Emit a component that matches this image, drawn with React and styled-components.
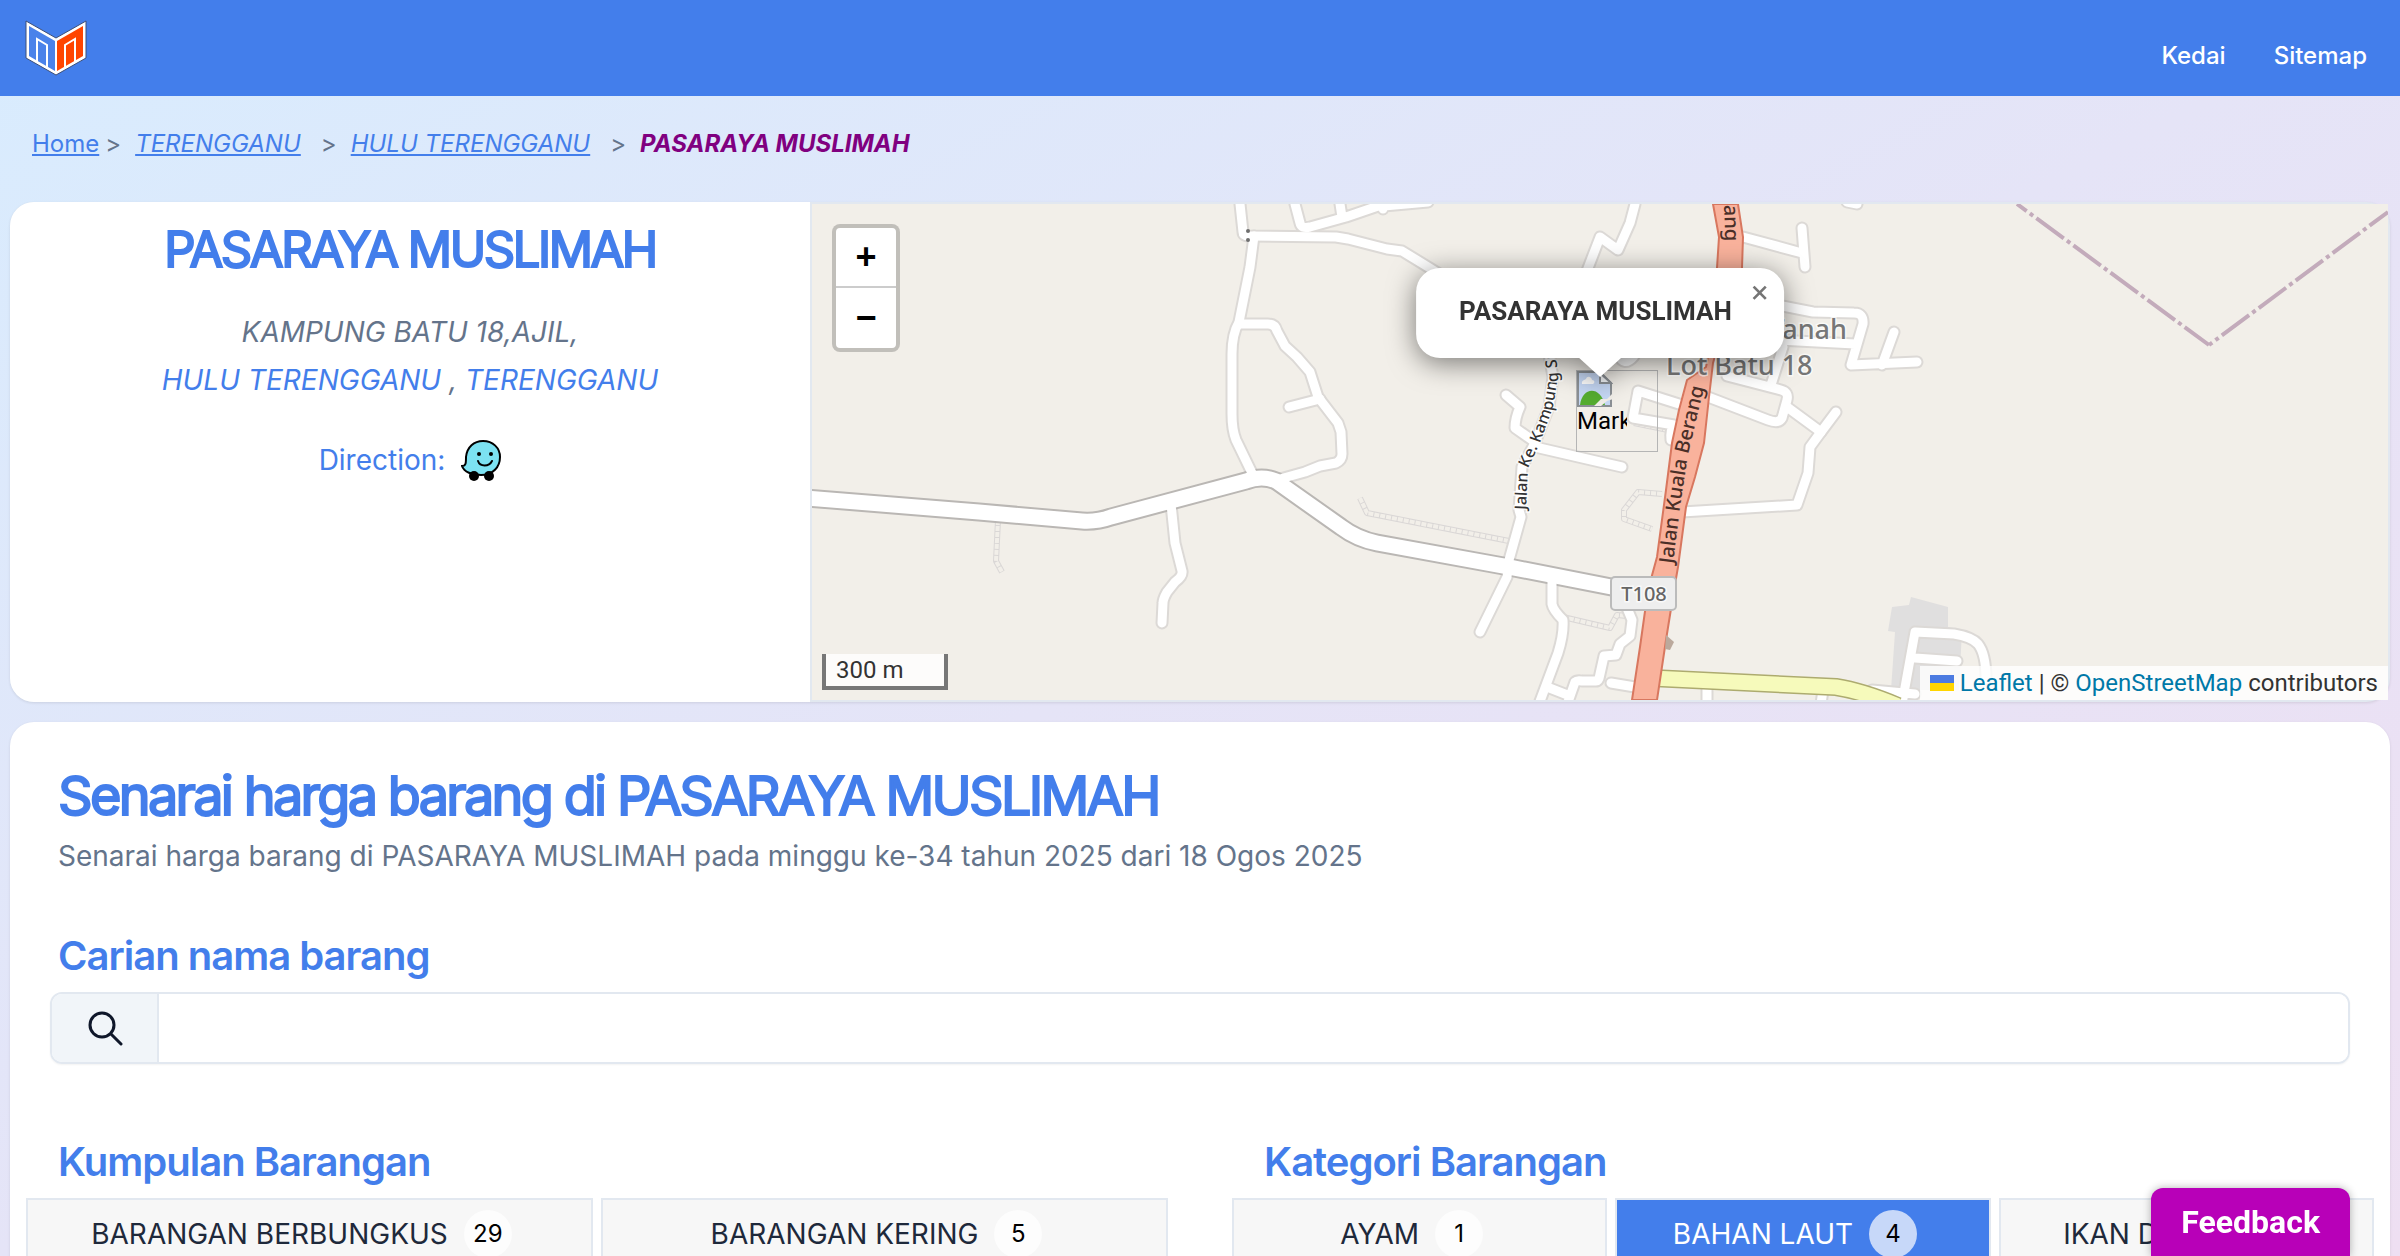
import React, { useState } from 'react'
import styled, { createGlobalStyle } from 'styled-components'

const KUMPULAN = [
    { name: 'BARANGAN BERBUNGKUS', total: 29 },
    { name: 'BARANGAN KERING', total: 5 },
]

const KATEGORI = [
    { name: 'AYAM', total: 1 },
    { name: 'BAHAN LAUT', total: 4 },
    { name: 'IKAN DARAT', total: 2 },
]

export default function App() {
    const [kumpulan, setKumpulan] = useState('')
    const [kategori, setKategori] = useState('BAHAN LAUT')

    return (
        <Page>
            <GlobalStyle />
            <Navbar>
                <LogoLink href="#" aria-label="Laman utama"><Logo /></LogoLink>
                <NavLinks>
                    <a href="#kedai">Kedai</a>
                    <a href="#sitemap">Sitemap</a>
                </NavLinks>
            </Navbar>

            <Breadcrumb aria-label="Breadcrumb">
                <Crumb><a href="#home">Home</a></Crumb>
                <Crumb $italic><Arrow>&gt;</Arrow><a href="#negeri">TERENGGANU</a></Crumb>
                <Crumb $italic $spaced><Arrow>&gt;</Arrow><a href="#daerah">HULU TERENGGANU</a></Crumb>
                <Crumb $italic $spaced><Arrow>&gt;</Arrow><Current>PASARAYA MUSLIMAH</Current></Crumb>
            </Breadcrumb>

            <StoreRow>
                <StoreInfo>
                    <StoreName>PASARAYA MUSLIMAH</StoreName>
                    <Address>
                        KAMPUNG BATU 18,AJIL,<br />
                        <a href="#daerah">HULU TERENGGANU</a> , <a href="#negeri">TERENGGANU</a>
                    </Address>
                    <Direction href="#waze">Direction: <Waze /></Direction>
                </StoreInfo>
                <MapPanel>
                    <MapTiles />
                    <BrokenMarker><BrokenImage /><span>Marker</span></BrokenMarker>
                    <Popup>
                        <strong>PASARAYA MUSLIMAH</strong>
                        <PopupClose type="button" aria-label="Close popup">×</PopupClose>
                    </Popup>
                    <ZoomControl>
                        <button type="button" aria-label="Zoom in">+</button>
                        <button type="button" aria-label="Zoom out">−</button>
                    </ZoomControl>
                    <Scale>300 m</Scale>
                    <Attribution>
                        <Flag viewBox="0 0 12 8" aria-hidden="true">
                            <path fill="#4C7BE1" d="M0 0h12v4H0z" />
                            <path fill="#FFD500" d="M0 4h12v4H0z" />
                        </Flag>
                        <a href="#leaflet">Leaflet</a> | © <a href="#osm">OpenStreetMap</a> contributors
                    </Attribution>
                </MapPanel>
            </StoreRow>

            <PriceCard>
                <PriceHeader>
                    <Title>Senarai harga barang di PASARAYA MUSLIMAH</Title>
                    <Subtitle>Senarai harga barang di PASARAYA MUSLIMAH pada minggu ke-34 tahun 2025 dari 18 Ogos 2025</Subtitle>
                </PriceHeader>
                <SectionLabel as="label" htmlFor="carian">Carian nama barang</SectionLabel>
                <SearchBox>
                    <SearchIcon><Magnifier /></SearchIcon>
                    <input id="carian" type="text" />
                </SearchBox>
                <Groups>
                    <FilterGroup title="Kumpulan Barangan" items={KUMPULAN} active={kumpulan} onPick={setKumpulan} />
                    <FilterGroup title="Kategori Barangan" items={KATEGORI} active={kategori} onPick={setKategori} />
                </Groups>
            </PriceCard>

            <Feedback type="button">Feedback</Feedback>
        </Page>
    )
}

function FilterGroup({ title, items, active, onPick }) {
    return (
        <section>
            <SectionLabel>{title}</SectionLabel>
            <FilterGrid $columns={items.length}>
                {items.map((item) => (
                    <FilterButton
                        key={item.name}
                        type="button"
                        $active={item.name === active}
                        onClick={() => onPick(item.name)}
                    >
                        {item.name}
                        <Badge>{item.total}</Badge>
                    </FilterButton>
                ))}
            </FilterGrid>
        </section>
    )
}

function Logo() {
    return (
        <svg width="62" height="56" viewBox="0 0 62 56" aria-hidden="true">
            <path d="M1 1 31 18 61 1V38L31 55 1 38Z" fill="#fff" stroke="#3d4f78" strokeWidth="1" />
            <path d="M4 6 30 21V51L4 36Z" fill="#4a82ea" />
            <path d="M32 21 58 6V36L32 51Z" fill="#ff4500" />
            <g fill="none" stroke="#fff" strokeWidth="2">
                <path d="M12 42V19L22 25V48" />
                <path d="M40 48V25L50 19V42" />
            </g>
        </svg>
    )
}

function Waze() {
    return (
        <svg width="40" height="42" viewBox="0 0 40 42" aria-hidden="true">
            <path
                d="M22 2C32 2 39 9 39 18C39 28 32 36 20 36C11 36 3 33 1 27C5 27 5 24 5 18C6 8 13 2 22 2Z"
                fill="#7ce2f2" stroke="#000" strokeWidth="2"
            />
            <circle cx="13" cy="37" r="5" />
            <circle cx="28" cy="37" r="5" />
            <circle cx="18" cy="15" r="2" />
            <circle cx="30" cy="15" r="2" />
            <path d="M17 22C19 28 28 28 31 22" fill="none" stroke="#000" strokeWidth="2" strokeLinecap="round" />
        </svg>
    )
}

function Magnifier() {
    return (
        <svg width="36" height="36" viewBox="0 0 36 36" fill="none" stroke="#0f172a" strokeWidth="3" strokeLinecap="round" aria-hidden="true">
            <circle cx="15" cy="15" r="12" />
            <path d="m24 24 10 10" />
        </svg>
    )
}

function BrokenImage() {
    return (
        <svg width="36" height="36" viewBox="0 0 36 36" aria-hidden="true">
            <path d="M1 1H23L34 12V35H1Z" fill="#c6d8f5" stroke="#8b9095" strokeWidth="2" />
            <path d="M5 13C4 9 8 9 9 8C10 4 15 6 15 9C18 9 18 12 16 13Z" fill="#fff" />
            <path d="M3 34C5 16 23 14 28 34Z" fill="#55ad30" />
            <path d="M23 2V12H34Z" fill="#f4f6f8" stroke="#8b9095" strokeWidth="2" />
            <path d="M36 22 30 28H24L17 35H24L30 30L36 28Z" fill="#f1eee8" />
        </svg>
    )
}

const LANES = [
    'M428 0 431 28Q431 32 437 32L524 33 536 35 575 45 590 47 634 74',
    'M442 32 438 63 427 118Q420 130 420 150V210Q420 226 424 236L440 269',
    'M427 120H456Q463 120 465 127L473 142 485 153 498 168 506 193 526 219 529 228 530 250Q530 256 524 259L508 262 493 268 468 275',
    'M508 195 477 203',
    'M483 0 488 19Q489 25 498 23L534 13 572 0M528 0 530 13M572 2 616 -2M571 0V5',
    'M359 300 363 339 370 367Q371 372 363 378L355 388Q351 395 351 399L350 419',
    'M737 150 741 173 737 203 723 239 710 263 707 306 709 313 697 356 695 373 668 428',
    'M694 191 708 203Q703 214 703 224L723 238',
    'M723 243 788 258 810 263',
    'M740 372V400Q741 406 751 416Q752 430 746 449L727 500',
    'M735 483 758 492M756 498 763 478Q765 476 770 477L784 477Q787 477 788 470L792 452 804 451 808 440 818 432 820 416 815 404',
    'M799 479 823 483',
    'M823 0 818 19 806 46 788 33 773 72',
    'M931 33 990 49M990 24 993 63',
    'M960 100 1001 108 1042 109Q1052 109 1051 120L1039 161 1105 158M1082 128 1070 161M965 136 1043 140',
    'M959 181 971 143M915 172 969 186Q977 188 975 196L970 214Q967 220 956 216L896 193M975 203 1009 228 1024 208',
    'M1009 228 998 243 996 269 985 301 870 308',
    'M867 200 826 187 821 214 862 221Q858 226 859 236',
    'M806 150Q812 164 822 152',
    'M1090 500 1103 428 1142 430Q1160 433 1166 440Q1174 450 1174 475M1103 454 1145 457M1060 486 1103 490',
    'M895 482V500M1011 486 1009 500M1035 -2 1045 0',
]

const TRACKS = [
    'M548 294 555 309 697 337',
    'M751 413 798 424 805 411 815 412',
    'M186 316 184 357 190 368',
    'M850 290 826 288 812 306V315L840 325',
    'M822 219 856 226',
]

function MapTiles() {
    const trunk = 'M901 0 907 33 905 64 896 153 894 163 875 176 867 206 860 239 854 286 845 353 836 386 828 443 820 496H845L854 436 862 386 866 363 874 303 883 273 892 239 897 193 901 159 930 64 931 33 926 0Z'
    const mainRoad = 'M-5 294 167 308 270 317Q285 318 299 313L434 277Q450 271 464 277L529 323Q545 335 565 339L697 363 835 390'
    return (
        <MapSvg viewBox="0 0 1576 496" preserveAspectRatio="xMidYMid slice" role="img" aria-label="Peta kedai">
            <defs>
                <path id="ke" d="M714 306 716 264 728 239 741 203 746 173 743 140" />
                <path id="kuala" d="M861 360 868 303 876 250 893 180" />
            </defs>
            <rect width="1576" height="496" fill="#f2efe9" />
            <path d="M1080 403 1097 401 1099 393 1136 403V423L1150 426 1147 486H1079L1083 428 1076 427Z" fill="#e0dfdf" />
            <g fill="none" stroke="#dad7d6" strokeWidth="6" strokeLinejoin="round">
                {TRACKS.map((d) => <path key={d} d={d} />)}
            </g>
            <g fill="none" stroke="#f2efe9" strokeWidth="4" strokeLinejoin="round" strokeDasharray="5 1">
                {TRACKS.map((d) => <path key={d} d={d} />)}
            </g>
            <g fill="none" stroke="#dcd9d6" strokeWidth="13" strokeLinecap="round" strokeLinejoin="round">
                {LANES.map((d) => <path key={d} d={d} />)}
            </g>
            <path d={mainRoad} fill="none" stroke="#bab7b4" strokeWidth="19" />
            <g fill="none" stroke="#fff" strokeWidth="9" strokeLinecap="round" strokeLinejoin="round">
                {LANES.map((d) => <path key={d} d={d} />)}
            </g>
            <path d={mainRoad} fill="none" stroke="#fff" strokeWidth="15" />
            <path d="M840 474 1024 483Q1050 487 1086 502" fill="none" stroke="#adab6f" strokeWidth="18" />
            <path d="M840 474 1024 483Q1050 487 1086 502" fill="none" stroke="#f6fabb" strokeWidth="15" />
            <path d={trunk} fill="#f9b29c" stroke="#d8775f" strokeWidth="2" />
            <path d="M854 431 862 438 858 446 853 445Z" fill="#bba99c" />
            <circle cx="436" cy="27" r="2" fill="#6f6f6f" />
            <circle cx="436" cy="36" r="2" fill="#6f6f6f" />
            <g fill="none" stroke="#c3abbb" strokeWidth="4">
                <path d="M1205 0 1397 141" strokeDasharray="34 4 4 4" strokeDashoffset="22" />
                <path d="M1397 141 1576 8" strokeDasharray="34 4 4 4" strokeDashoffset="30" />
            </g>
            <MapLabels>
                <text fontSize="27" fill="#777" x="1035" y="135" textAnchor="end">Tanah</text>
                <text fontSize="27" fill="#777" x="854" y="171">Lot Batu 18</text>
                <text fontSize="16" fill="#333"><textPath href="#ke">Jalan Ke. Kampung Su</textPath></text>
                <RoadName fontSize="20"><textPath href="#kuala">Jalan Kuala Berang</textPath></RoadName>
                <RoadName fontSize="20" transform="translate(912 1) rotate(88)">ang</RoadName>
                <RoadName fontSize="20" transform="translate(840 502) rotate(-84)">J</RoadName>
            </MapLabels>
            <rect x="799" y="373" width="65" height="33" rx="4" fill="#eee" stroke="#bbb" strokeWidth="2" />
            <MapLabels>
                <text fontSize="20" fill="#666" x="832" y="397" textAnchor="middle">T108</text>
            </MapLabels>
        </MapSvg>
    )
}

const GlobalStyle = createGlobalStyle`

    *{
        box-sizing: border-box;
    }

    body{
        margin: 0;
        font-family: Inter, 'Liberation Sans', sans-serif;
        color: #64748b;
    }

    a{
        color: #437eeb;
        text-decoration: none;
    }

    button, input{
        font-family: inherit;
    }

`;

const Page = styled.div`

    height: 100vh;
    overflow: hidden;
    background: linear-gradient(to bottom right, #d8ecfe, #e5e4f7 50%, #eedff2);

`;

const Navbar = styled.header`

    display: flex;
    justify-content: space-between;
    align-items: center;
    height: 96px;
    padding: 0 33px 0 25px;
    background: #437eeb;

`;

const LogoLink = styled.a`

    display: flex;

`;

const NavLinks = styled.nav`

    display: flex;
    gap: 48px;
    padding-top: 16px;
    font-size: 24px;
    line-height: 32px;
    font-weight: 500;

    a{
        color: #fff;
    }

`;

const Breadcrumb = styled.nav`

    display: flex;
    gap: 6px;
    padding: 32px 32px 42px;
    font-size: 24px;
    line-height: 32px;

    a{
        text-decoration: underline;
    }

`;

const Crumb = styled.span`

    display: flex;
    gap: 14px;
    font-style: ${(props) => (props.$italic ? 'italic' : 'normal')};
    margin-left: ${(props) => (props.$spaced ? '14px' : '0')};

`;

const Arrow = styled.span`

    font-style: normal;

`;

const Current = styled.strong`

    color: #800080;

`;

const StoreRow = styled.section`

    display: grid;
    grid-template-columns: 40fr 79fr;
    margin: 0 10px 20px;
    background: #e2e8f0;
    border-radius: 24px;
    box-shadow: 0 1px 3px rgba(0, 0, 0, 0.1);

`;

const StoreInfo = styled.div`

    display: flex;
    flex-direction: column;
    align-items: center;
    min-height: 500px;
    padding-top: 16px;
    background: #fff;
    border-radius: 24px 0 0 24px;
    font-size: 28px;
    line-height: 48px;
    text-align: center;

`;

/* big headings: regular cut thickened with a stroke, tight tracking */
const Heading = styled.h2`

    margin: 0;
    font-weight: 400;
    letter-spacing: -0.05em;
    color: #437eeb;
    -webkit-text-stroke: 2px #437eeb;

`;

const StoreName = styled(Heading).attrs({ as: 'h1' })`

    margin-bottom: 26px;
    font-size: 49px;
    line-height: 64px;

`;

const Address = styled.address`

    margin-bottom: 32px;

`;

const Direction = styled.a`

    display: flex;
    align-items: center;
    gap: 16px;

`;

const MapPanel = styled.div`

    position: relative;
    margin: 2px;
    overflow: hidden;
    font-family: Roboto, 'Liberation Sans', sans-serif;
    color: #333;

`;

const MapSvg = styled.svg`

    position: absolute;
    inset: 0;
    width: 100%;
    height: 100%;

`;

const MapLabels = styled.g`

    font-family: 'Noto Sans', sans-serif;
    font-weight: 500;
    paint-order: stroke;
    stroke: rgba(255, 255, 255, 0.7);
    stroke-width: 3px;

`;

const RoadName = styled.text`

    fill: #4a2f28;
    stroke: none;

`;

const Popup = styled.div`

    position: absolute;
    top: 64px;
    left: 50%;
    transform: translateX(-50%);
    padding: 27px 52px 31px 43px;
    background: #fff;
    border-radius: 24px;
    font-size: 26px;
    line-height: 32px;
    white-space: nowrap;
    filter: drop-shadow(0 5px 14px rgba(0, 0, 0, 0.5));

    &::after{
        content: '';
        position: absolute;
        left: 50%;
        bottom: -19px;
        margin-left: -22px;
        border: 22px solid transparent;
        border-top: 20px solid #fff;
        border-bottom: 0;
    }

`;

const PopupClose = styled.button`

    position: absolute;
    top: 8px;
    right: 8px;
    width: 32px;
    height: 32px;
    padding: 0;
    border: 0;
    background: none;
    color: #757575;
    font-size: 32px;
    line-height: 32px;

`;

const BrokenMarker = styled.div`

    position: absolute;
    top: 166px;
    left: 50%;
    width: 82px;
    height: 82px;
    margin-left: -24px;
    border: 1px solid #b5b5b5;
    color: #000;
    font-size: 24px;
    line-height: 28px;

    svg{
        display: block;
    }

    span{
        display: block;
        width: 50px;
        overflow: hidden;
    }

`;

const ZoomControl = styled.div`

    position: absolute;
    top: 20px;
    left: 20px;
    display: flex;
    flex-direction: column;
    background: #fff;
    background-clip: padding-box;
    border: 4px solid rgba(0, 0, 0, 0.2);
    border-radius: 8px;

    button{
        width: 60px;
        height: 60px;
        padding: 0;
        border: 0;
        background: none;
        font: bold 36px/56px 'Liberation Sans', Arial, sans-serif;
        color: #000;
    }

    button:first-child{
        border-bottom: 2px solid #ccc;
    }

`;

const Scale = styled.div`

    position: absolute;
    left: 10px;
    bottom: 10px;
    width: 126px;
    height: 36px;
    padding-left: 10px;
    background: rgba(255, 255, 255, 0.8);
    border: 4px solid #777;
    border-top: 0;
    font-size: 24px;
    line-height: 32px;

`;

const Attribution = styled.div`

    position: absolute;
    right: 0;
    bottom: 0;
    display: flex;
    align-items: center;
    gap: 6px;
    padding: 0 10px;
    background: rgba(255, 255, 255, 0.8);
    font-size: 24px;
    line-height: 34px;

    a{
        color: #0078a8;
    }

`;

const Flag = styled.svg`

    width: 24px;
    height: 16px;

`;

const PriceCard = styled.main`

    margin: 0 10px;
    padding: 38px 16px 32px;
    background: #fff;
    border-radius: 24px;
    box-shadow: 0 1px 3px rgba(0, 0, 0, 0.1);

`;

const PriceHeader = styled.header`

    padding: 0 32px;
    margin-bottom: 52px;

`;

const Title = styled(Heading)`

    margin-bottom: 8px;
    font-size: 54px;
    line-height: 72px;

`;

const Subtitle = styled.p`

    margin: 0;
    font-size: 28px;
    line-height: 32px;

`;

const SectionLabel = styled.h3`

    display: block;
    margin: 0;
    padding: 0 32px;
    font-size: 40px;
    line-height: 64px;
    font-weight: 600;
    letter-spacing: -0.025em;
    color: #437eeb;

`;

const SearchBox = styled.div`

    display: flex;
    height: 72px;
    margin: 4px 24px 66px;
    border: 2px solid #e2e8f0;
    border-radius: 12px;
    overflow: hidden;
    box-shadow: 0 1px 2px rgba(0, 0, 0, 0.05);

    input{
        flex: 1;
        padding: 0 24px;
        border: 0;
        outline: none;
        font-size: 28px;
    }

`;

const SearchIcon = styled.span`

    display: flex;
    align-items: center;
    justify-content: center;
    width: 107px;
    background: #f1f5f9;
    border-right: 2px solid #e2e8f0;

`;

const Groups = styled.div`

    display: grid;
    grid-template-columns: 1fr 1fr;
    gap: 64px;

`;

const FilterGrid = styled.div`

    display: grid;
    grid-template-columns: repeat(${(props) => props.$columns}, 1fr);
    gap: 8px;
    margin-top: 4px;

`;

const FilterButton = styled.button`

    display: flex;
    align-items: center;
    justify-content: center;
    gap: 16px;
    height: 72px;
    padding: 0 16px 0 0;
    border: 2px solid #e2e8f0;
    background: ${(props) => (props.$active ? '#437eeb' : '#f7f7f7')};
    color: ${(props) => (props.$active ? '#fff' : '#1e293b')};
    font-size: 28px;
    white-space: nowrap;

`;

const Badge = styled.span`

    width: 48px;
    height: 48px;
    border-radius: 50%;
    background: rgba(255, 255, 255, 0.7);
    color: #000;
    font-size: 24px;
    line-height: 48px;

`;

const Feedback = styled.button`

    position: fixed;
    right: 50px;
    bottom: 0;
    height: 68px;
    padding: 0 30px;
    border: 0;
    border-radius: 12px 12px 0 0;
    background: #b800b8;
    color: #fff;
    font: bold 32px/40px Roboto, 'Liberation Sans', sans-serif;
    box-shadow: 0 0 8px rgba(0, 0, 0, 0.3);

`;
